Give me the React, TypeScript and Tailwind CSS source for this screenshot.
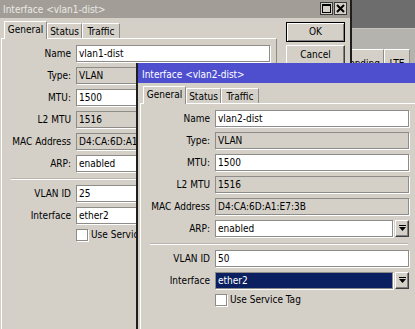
import React from 'react';

// Two overlapping Winbox-style "Interface" dialogs.

interface FieldRow {
  label: string;
  value: string;
  readOnly?: boolean;
  dropdown?: boolean;
  selected?: boolean;
}

interface WindowProps {
  title: string;
  active: boolean;
  rows: FieldRow[];
  vlanId: string;
  iface: string;
  ifaceSelected?: boolean;
  className: string;
}

const DropButton = () => (
  <div className="w-[14px] h-[17px] flex items-center justify-center bg-[#d4d0c8] border border-t-white border-l-white border-b-[#404040] border-r-[#404040] shadow-[inset_-1px_-1px_0_#808080]">
    <svg width="7" height="7" viewBox="0 0 7 7">
      <rect x="0" y="0" width="7" height="1" fill="#000" />
      <polygon points="0,2 7,2 3.5,6" fill="#000" />
    </svg>
  </div>
);

const Field: React.FC<{ row: FieldRow }> = ({ row }) => {
  const box = row.selected
    ? 'bg-[#0a2060] text-white'
    : row.readOnly
    ? 'bg-[#d4d0c8] text-black'
    : 'bg-white text-black';
  return (
    <div className="flex items-center h-[17px]">
      <div className="w-[68px] text-right whitespace-nowrap">{row.label}</div>
      <div className="ml-[5px] flex gap-[2px]">
        <div
          className={`${row.dropdown ? 'w-[178px]' : 'w-[194px]'} h-[17px] flex items-center pl-[2px] border border-[#8e8c88] shadow-[1px_1px_0_#ffffff] whitespace-nowrap overflow-hidden ${box}`}
        >
          {row.value}
        </div>
        {row.dropdown && <DropButton />}
      </div>
    </div>
  );
};

const Tab: React.FC<{ label: string; width: string; selected?: boolean }> = ({ label, width, selected }) =>
  selected ? (
    <div className={`${width} h-[18px] -mb-px relative z-10 flex items-start justify-center pt-[3px] bg-[#d4d0c8] border-t border-l border-white border-r border-r-[#8e8c88]`}>
      {label}
    </div>
  ) : (
    <div className={`${width} h-[15px] flex items-center justify-center pt-[2px] bg-[#d4d0c8] border-t border-l border-white border-r border-r-[#8e8c88]`}>
      {label}
    </div>
  );

const TitleButton: React.FC<{ kind: 'max' | 'close' }> = ({ kind }) => (
  <div className="w-[13px] h-[13px] flex items-center justify-center bg-[#d4d0c8] border border-[#3a3a3a]">
    {kind === 'max' ? (
      <svg width="9" height="9" viewBox="0 0 9 9">
        <rect x="0.5" y="0.5" width="8" height="8" fill="none" stroke="#000" />
        <rect x="0" y="0" width="9" height="2" fill="#000" />
      </svg>
    ) : (
      <svg width="9" height="9" viewBox="0 0 9 9">
        <path d="M1 1 L8 8 M8 1 L1 8" stroke="#000" strokeWidth="2" />
      </svg>
    )}
  </div>
);

const Button: React.FC<{ label: string; primary?: boolean }> = ({ label, primary }) => (
  <div
    className={`h-[20px] flex items-center justify-center bg-[#d4d0c8] ${
      primary
        ? 'border border-black shadow-[inset_1px_1px_0_#ffffff,inset_-1px_-1px_0_#808080]'
        : 'border border-t-white border-l-white border-b-[#404040] border-r-[#404040] shadow-[inset_-1px_-1px_0_#808080]'
    }`}
  >
    {label}
  </div>
);

const InterfaceWindow: React.FC<WindowProps> = ({ title, active, rows, vlanId, iface, ifaceSelected, className }) => (
  <div className={`absolute w-[355px] h-[340px] flex flex-col bg-[#d4d0c8] border-x-2 border-[#1e1e1e] ${className}`}>
    <div
      className={`h-[20px] shrink-0 flex items-center justify-between pl-[4px] pr-[3px] ${
        active ? 'bg-[#4e4fcf] text-white' : 'bg-[#a29e97] text-[#ece9e4]'
      }`}
    >
      <span className="whitespace-nowrap pt-[3px]">{title}</span>
      <div className="flex gap-px">
        <TitleButton kind="max" />
        <TitleButton kind="close" />
      </div>
    </div>

    <div className="flex">
      <div className="ml-[2px] w-[276px] pt-[3px]">
        <div className="flex items-end h-[17px] pl-[3px]">
          <Tab label="General" width="w-[43px]" selected />
          <Tab label="Status" width="w-[35px]" />
          <Tab label="Traffic" width="w-[38px]" />
        </div>
        <div className="h-[300px] border-t border-l border-white border-r border-r-[#8e8c88] pt-[6px] pl-[1px]">
          <div className="flex flex-col gap-[5px]">
            {rows.map(r => (
              <Field key={r.label} row={r} />
            ))}
          </div>
          <div className="mt-[6px] ml-[8px] mr-[7px] h-[2px] border-t border-[#b9b5ad] border-b border-b-white" />
          <div className="mt-[5px] flex flex-col gap-[5px]">
            <Field row={{ label: 'VLAN ID', value: vlanId }} />
            <Field row={{ label: 'Interface', value: iface, dropdown: true, selected: ifaceSelected }} />
            <div className="flex items-center h-[12px]">
              <div className="ml-[73px] w-[12px] h-[12px] bg-white border border-[#8e8c88] shadow-[1px_1px_0_#ffffff]" />
              <span className="ml-[3px] whitespace-nowrap">Use Service Tag</span>
            </div>
          </div>
        </div>
      </div>

      <div className="ml-[9px] w-[59px] pt-[4px] flex flex-col gap-[3px]">
        <Button label="OK" primary />
        <Button label="Cancel" />
        <Button label="Apply" />
        <Button label="Disable" />
        <Button label="Comment" />
        <Button label="Copy" />
        <Button label="Remove" />
        <Button label="Torch" />
      </div>
    </div>
  </div>
);

const baseRows = (name: string, arp: string): FieldRow[] => [
  { label: 'Name', value: name },
  { label: 'Type:', value: 'VLAN', readOnly: true },
  { label: 'MTU:', value: '1500' },
  { label: 'L2 MTU', value: '1516', readOnly: true },
  { label: 'MAC Address', value: 'D4:CA:6D:A1:E7:3B', readOnly: true },
  { label: 'ARP:', value: arp, dropdown: true },
];

export default function App() {
  return (
    <div className="relative w-[415px] h-[329px] overflow-hidden bg-[#d4d0c8] text-[10px] leading-none text-black font-['DejaVu_Sans_Condensed','DejaVu_Sans',sans-serif]">
      {/* main window behind the dialogs */}
      <div className="absolute left-[300px] top-0 w-[115px] h-[63px] flex flex-col">
        <div className="h-[29px] bg-[#6d6d6d]" />
        <div className="h-[21px] bg-[#b5b3ad] border-t border-[#c4c2bc]" />
        <div className="flex-1 flex items-start bg-[#b5b3ad] pl-[39px]">
          <div className="w-[45px] h-[14px] flex justify-center pt-[9px] bg-[#d4d0c8] border-t border-l border-white border-r border-r-[#8e8c88]">Bonding</div>
          <div className="w-[26px] h-[14px] flex justify-center pt-[9px] bg-[#d4d0c8] border-t border-l border-white border-r border-r-[#8e8c88]">LTE</div>
        </div>
      </div>

      <InterfaceWindow
        className="left-[-3px] top-[-2px]"
        title="Interface <vlan1-dist>"
        active={false}
        rows={baseRows('vlan1-dist', 'enabled')}
        vlanId="25"
        iface="ether2"
      />
      <InterfaceWindow
        className="left-[136px] top-[63px]"
        title="Interface <vlan2-dist>"
        active
        rows={baseRows('vlan2-dist', 'enabled')}
        vlanId="50"
        iface="ether2"
        ifaceSelected
      />
    </div>
  );
}
